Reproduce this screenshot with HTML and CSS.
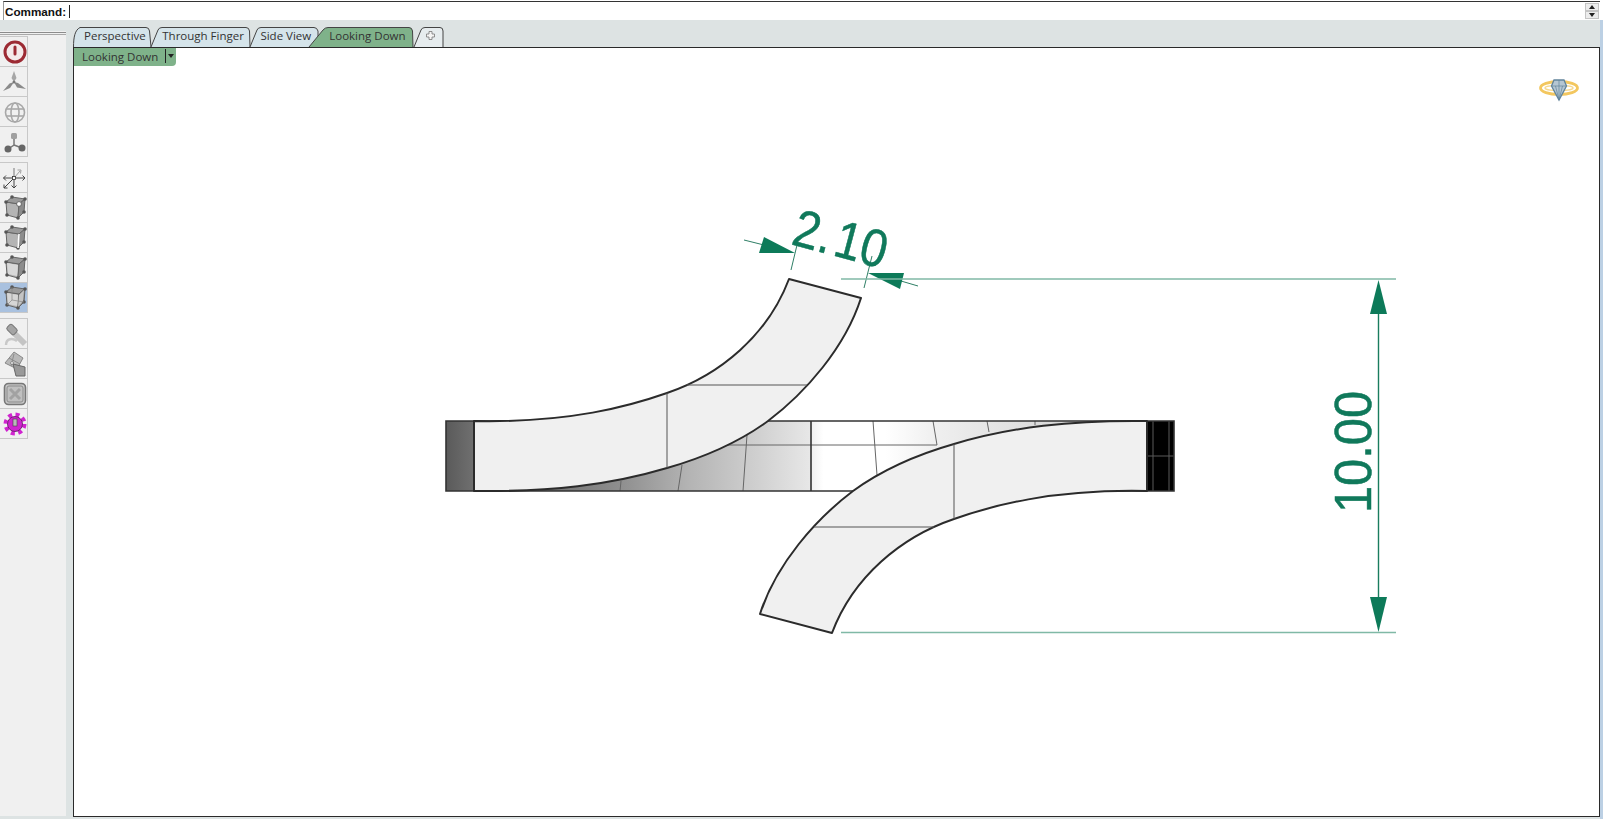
FILE: index.html
```html
<!DOCTYPE html>
<html lang="en">
  <head>
    <meta charset="UTF-8" />
    <title>Looking Down</title>
    <link rel="stylesheet" href="styles.css">
  </head>
  <body>
    <svg class="defs" width="0" height="0">
      <defs>
        <symbol id="cube" viewBox="0 0 28 29">
          <polygon points="6,10 19,12 18,26 7,23" fill="#b4b4b4" stroke="#666" stroke-width="1" />
          <polygon points="6,10 12,5 25,7 19,12" fill="#9a9a9a" stroke="#666" stroke-width="1" />
          <polygon points="19,12 25,7 24,20 18,26" fill="#8c8c8c" stroke="#666" stroke-width="1" />
          <g fill="#555">
            <circle cx="6" cy="10" r="1.8" />
            <circle cx="12" cy="5" r="1.8" />
            <circle cx="25" cy="7" r="1.8" />
            <circle cx="24" cy="20" r="1.8" />
            <circle cx="18" cy="26" r="1.8" />
            <circle cx="7" cy="23" r="1.8" />
          </g>
        </symbol>
        <linearGradient id="shade-left" gradientUnits="userSpaceOnUse" x1="540" y1="0" x2="812" y2="0">
          <stop offset="0" stop-color="#6e6e6e" />
          <stop offset="0.3" stop-color="#8f8f8f" />
          <stop offset="0.55" stop-color="#b4b4b4" />
          <stop offset="0.8" stop-color="#d0d0d0" />
          <stop offset="1" stop-color="#e8e8e8" />
        </linearGradient>
        <linearGradient id="shade-right" gradientUnits="userSpaceOnUse" x1="811" y1="0" x2="1060" y2="0">
          <stop offset="0" stop-color="#f0f0f0" />
          <stop offset="0.05" stop-color="#fff" />
          <stop offset="0.3" stop-color="#fff" />
          <stop offset="0.5" stop-color="#efefef" />
          <stop offset="1" stop-color="#d8d8d8" />
        </linearGradient>
        <linearGradient id="cap-left" gradientUnits="userSpaceOnUse" x1="446" y1="0" x2="474" y2="0">
          <stop offset="0" stop-color="#5a5a5a" />
          <stop offset="1" stop-color="#707070" />
        </linearGradient>
        <g id="band">
          <path class="band-edge" d="M474 421 C570 423 630 406 667 393 C720 375 768 335 789 279 L861 298 C845 348 805 393 768 421 C735 445 695 460 667 468 C610 485 550 492 474 491 Z" />
          <line class="band-line" x1="667" y1="393" x2="667" y2="468" />
          <line class="band-line" x1="687" y1="385" x2="807" y2="385" />
        </g>
      </defs>
    </svg>

    <div class="command-bar">
      <span class="command-label">Command:</span>
      <span class="caret"></span>
      <div class="spinner">
        <span class="spin-btn"><i class="arrow-up"></i></span>
        <span class="spin-btn"><i class="arrow-down"></i></span>
      </div>
    </div>

    <div class="workspace">
      <aside class="sidebar">
        <div class="gripper"></div>

        <div class="tool-group">
          <div class="tool">
            <svg viewBox="0 0 28 29">
              <circle cx="15" cy="15" r="10" fill="#f4eaea" stroke="#9c2a33" stroke-width="3" />
              <line x1="15" y1="10" x2="15" y2="17" stroke="#9c2a33" stroke-width="3" stroke-linecap="round" />
            </svg>
          </div>
          <div class="tool">
            <svg viewBox="0 0 28 29">
              <path d="M14 15 L11.5 11 L14 4 L16.5 11 Z" fill="#a6a6a6" />
              <path d="M14 15 L9.5 16.5 L3 24 L10 21 Z" fill="#8a8a8a" />
              <path d="M14 15 L18 16 L26 22 L17 20.5 Z" fill="#8a8a8a" />
              <circle cx="14" cy="15" r="1.5" fill="#777" />
            </svg>
          </div>
          <div class="tool">
            <svg viewBox="0 0 28 29" fill="none" stroke="#a8a8a8" stroke-width="1.6">
              <circle cx="15" cy="15.5" r="9.5" />
              <ellipse cx="15" cy="15.5" rx="4" ry="9.5" />
              <line x1="6" y1="12" x2="24" y2="12" />
              <line x1="6" y1="19" x2="24" y2="19" />
            </svg>
          </div>
          <div class="tool">
            <svg viewBox="0 0 28 29">
              <path d="M14 9 V18 L8 22 M14 18 L22 21" fill="none" stroke="#777" stroke-width="1.5" />
              <rect x="11" y="6" width="6" height="6" rx="1.5" fill="#a0a0a0" />
              <circle cx="8" cy="22" r="3.5" fill="#666" />
              <circle cx="22" cy="21" r="3.5" fill="#666" />
            </svg>
          </div>
        </div>

        <div class="tool-group">
          <div class="tool">
            <svg viewBox="0 1 28 29" fill="none" stroke-width="1">
              <path d="M14 16 V6" stroke="#b4b4b4" stroke-width="2" />
              <path d="M14 16 L20 9" stroke="#a0a0a0" />
              <path d="M17.5 8 L21 8 L20.5 11.5" stroke="#a0a0a0" />
              <path d="M3.5 16 H25 M6 13.5 L3.5 16 L6 18.5 M22.5 13.5 L25 16 L22.5 18.5" stroke="#444" />
              <path d="M14 16 V26 M11.5 23.5 L14 26 L16.5 23.5" stroke="#444" />
              <path d="M14 16 L4 26 M4 22.5 V26 H7.5" stroke="#444" />
              <rect x="12.5" y="14.5" width="3" height="3" fill="#fff" stroke="#333" stroke-width="0.8" />
            </svg>
          </div>
          <div class="tool">
            <svg viewBox="0 1 28 29">
              <use href="#cube" width="28" height="29" />
              <circle cx="19" cy="12" r="2.4" fill="#fff" stroke="#555" stroke-width="0.8" />
            </svg>
          </div>
          <div class="tool">
            <svg viewBox="0 1 28 29">
              <use href="#cube" width="28" height="29" />
              <line x1="19" y1="12" x2="18" y2="26" stroke="#fff" stroke-width="1.6" />
            </svg>
          </div>
          <div class="tool">
            <svg viewBox="0 1 28 29">
              <use href="#cube" width="28" height="29" />
              <polygon points="7,11 18,13 17,24 8,22" fill="#d8d8d8" />
            </svg>
          </div>
          <div class="tool tool-active">
            <svg viewBox="0 1 28 29">
              <use href="#cube" width="28" height="29" />
              <polygon points="7,11 18,13 17,24 8,22" fill="#d6d6d6" />
              <polygon points="19,13 24,8 23,19 18,25" fill="#c4c4c4" />
              <path d="M12 5 L12 18 L7 23 M12 18 L24 20" fill="none" stroke="#888" stroke-width="0.7" />
            </svg>
          </div>
        </div>

        <div class="tool-group">
          <div class="tool">
            <svg viewBox="0 0 28 29">
              <path d="M6 26 C6 19 13 19 17 22" fill="none" stroke="#c8c8c8" stroke-width="2.5" />
              <path d="M14 14 L25 25" stroke="#c4c4c4" stroke-width="6" />
              <rect x="7" y="7" width="10" height="7" rx="2" transform="rotate(45 12 10.5)" fill="#a4a4a4" stroke="#777" />
            </svg>
          </div>
          <div class="tool">
            <svg viewBox="0 0 28 29">
              <polygon points="5,14 14,3 23,9 17,20" fill="#b8b8b8" stroke="#888" />
              <line x1="9" y1="9" x2="20" y2="15" stroke="#8c8c8c" />
              <line x1="14" y1="5" x2="11" y2="17" stroke="#8c8c8c" />
              <polygon points="13,15 25,18 25,27 16,27" fill="#999" stroke="#666" />
              <circle cx="12" cy="14" r="1.4" fill="#fff" stroke="#555" stroke-width="0.6" />
            </svg>
          </div>
          <div class="tool">
            <svg viewBox="0 0 28 29">
              <rect x="4.5" y="4.5" width="21" height="21" rx="4" fill="#c4c4c4" stroke="#777" stroke-width="1.6" />
              <rect x="7" y="7" width="16" height="16" rx="2" fill="#c0c0c0" stroke="#8c8c8c" />
              <path d="M10 10 L20 20 M20 10 L10 20" stroke="#a2a2a2" stroke-width="3" />
            </svg>
          </div>
          <div class="tool">
            <svg viewBox="0 0 28 29">
              <circle cx="15" cy="15" r="9.5" fill="none" stroke="#d024d0" stroke-width="4" stroke-dasharray="4 3.5" />
              <circle cx="15" cy="15" r="7.5" fill="#d024d0" stroke="#5a145a" stroke-width="0.8" />
              <rect x="13" y="10" width="4" height="7" fill="#b9b9b9" stroke="#444" stroke-width="0.6" />
            </svg>
          </div>
        </div>
      </aside>

      <main class="view-area">
        <div class="tab-strip">
          <svg class="tab-shapes" viewBox="73 20 1530 27" width="1530" height="27">
            <path class="tab-shape" d="M73.5 47 C73.5 37 75 30 80 27.5 H146 Q149 27.5 149.5 31 L151 47" />
            <path class="tab-shape" d="M151 47 L158 30 Q159 27.5 162 27.5 H246 Q249 27.5 249.5 31 L250 47" />
            <path class="tab-shape" d="M250 47 L257 30 Q258 27.5 261 27.5 H314 Q317 27.5 318 31 L318 47" />
            <path class="tab-shape tab-shape-active" d="M309 47 L323 30 Q325 27.5 328 27.5 H409 Q412 27.5 412.5 31 L413 47" />
            <path class="tab-shape tab-shape-add" d="M414 47 L421 30 Q422 27.5 425 27.5 H440 Q443 27.5 443 31 V47" />
          </svg>
          <span class="tab">Perspective</span>
          <span class="tab">Through Finger</span>
          <span class="tab">Side View</span>
          <span class="tab tab-active">Looking Down</span>
          <svg class="tab-plus" viewBox="0 0 9 9" width="9" height="9">
            <path d="M3 .5 H6 V3 H8.5 V6 H6 V8.5 H3 V6 H.5 V3 H3 Z" fill="#f4f4f4" stroke="#777" stroke-width="0.8" />
          </svg>
        </div>

        <div class="viewport">
          <div class="view-label">
            <span class="view-name">Looking Down</span>
            <span class="view-menu"><i class="arrow-down"></i></span>
          </div>

          <svg class="drawing" viewBox="74 48 1525 768">
            <!-- ring icon, top right -->
            <g fill="none">
              <ellipse cx="1559" cy="88" rx="18.5" ry="6.5" stroke="#f3c75f" stroke-width="2.8" />
              <ellipse cx="1559" cy="88" rx="14" ry="2.6" stroke="#f6d98f" stroke-width="1.4" />
              <polygon points="1554,80 1564,80 1566.5,86 1559,100 1551.5,86" fill="#b5c6d2" stroke="#62849b" stroke-width="1.3" />
              <path d="M1552 86 H1566 M1559 80 V100 M1555.5 86 L1559 100 L1562.5 86" stroke="#62849b" stroke-width="0.7" />
            </g>

            <!-- flat band behind -->
            <rect x="474" y="421" width="337" height="70" fill="url(#shade-left)" />
            <rect x="811" y="421" width="336" height="70" fill="url(#shade-right)" />
            <rect x="446" y="421" width="28" height="70" fill="url(#cap-left)" />
            <rect x="1147" y="421" width="27" height="70" fill="#000" />
            <g class="seam">
              <line x1="621" y1="481" x2="620" y2="491" />
              <line x1="682" y1="465" x2="678" y2="491" />
              <line x1="747" y1="435" x2="743" y2="491" />
              <line x1="873" y1="421" x2="877" y2="475" />
              <line x1="933" y1="421" x2="937" y2="445" />
              <line x1="987" y1="421" x2="989" y2="432" />
              <line x1="1035" y1="421" x2="1035" y2="425" />
              <line x1="727" y1="445" x2="937" y2="445" />
            </g>
            <g class="cap-seam">
              <line x1="1153" y1="421" x2="1153" y2="491" />
              <line x1="1169" y1="421" x2="1169" y2="491" />
              <line x1="1147" y1="456" x2="1174" y2="456" />
            </g>
            <path class="back-edge" d="M446 421 H1174 V491 H446 Z M474 421 V491 M811 421 V491 M1147 421 V491" />

            <!-- two bent ends, same shape turned half way round -->
            <use href="#band" />
            <use href="#band" transform="rotate(180 810.5 456)" />

            <!-- 2.10 width dimension -->
            <g class="dim-thin">
              <line x1="797" y1="245" x2="791" y2="270" />
              <line x1="744" y1="240" x2="764" y2="245" />
              <line x1="872" y1="256" x2="864" y2="288" />
              <line x1="901" y1="281" x2="918" y2="286" />
            </g>
            <polygon class="dim-fill" points="764,237 759,253 795,253" />
            <polygon class="dim-fill" points="868,273 904,273 900,289" />
            <text class="dim-text" font-size="50" transform="translate(790 244) rotate(15) scale(0.94 1.06)">2.<tspan dx="4">10</tspan></text>

            <!-- 10.00 height dimension -->
            <line class="dim-ext" x1="841" y1="279" x2="1396" y2="279" />
            <line class="dim-ext" x1="841" y1="632.5" x2="1396" y2="632.5" />
            <line class="dim-line" x1="1378.5" y1="285" x2="1378.5" y2="627" />
            <polygon class="dim-fill" points="1378.5,280 1387,314 1370,314" />
            <polygon class="dim-fill" points="1378.5,632 1387,597 1370,597" />
            <text class="dim-text" font-size="52" textLength="122" lengthAdjust="spacingAndGlyphs" transform="translate(1371 513) rotate(-90)">10.00</text>
          </svg>
        </div>
      </main>
    </div>
  </body>
</html>
```

FILE: styles.css
```css
html,
body {
  margin: 0;
  padding: 0;
  height: 100%;
}

body {
  display: flex;
  flex-direction: column;
  width: 1603px;
  height: 819px;
  overflow: hidden;
  background-color: #fff;
  font-family: "Liberation Sans", Arial, sans-serif;
}

.defs {
  position: absolute;
}

/* Command line */
.command-bar {
  display: flex;
  align-items: center;
  flex: none;
  height: 19px;
  margin: 1px 3px 0 3px;
  padding-left: 1px;
  box-sizing: border-box;
  border-top: 1px solid #333;
  border-left: 1px solid #999;
  background-color: #fff;
}

.command-label {
  font-size: 11.7px;
  font-weight: bold;
  color: #111;
}

.caret {
  width: 1px;
  height: 13px;
  margin-left: 3px;
  background-color: #222;
}

.spinner {
  display: flex;
  flex-direction: column;
  margin-left: auto;
  margin-right: 1px;
}

.spin-btn {
  display: flex;
  align-items: center;
  justify-content: center;
  width: 14px;
  height: 8px;
  box-sizing: border-box;
  border: 1px solid #c4c4c4;
  background-color: #ececec;
}

.arrow-up,
.arrow-down {
  display: block;
  width: 0;
  height: 0;
  border-left: 3.5px solid transparent;
  border-right: 3.5px solid transparent;
}

.arrow-up {
  border-bottom: 4px solid #222;
}

.arrow-down {
  border-top: 4px solid #222;
}

/* Everything under the command line */
.workspace {
  display: flex;
  flex: 1;
  min-height: 0;
  border-right: 3px solid #bcd0e4;
  background-color: #dde3e3;
}

.sidebar {
  flex: none;
  width: 66px;
  margin: 11px 7px 3px 0;
  background-color: #f0f0f0;
}

.gripper {
  height: 1px;
  margin: 1px 0;
  border-top: 1px solid #8c8c8c;
  border-bottom: 1px solid #a8a8a8;
}

.tool-group {
  display: flex;
  flex-direction: column;
  width: 28px;
  margin-bottom: 5px;
  border-top: 1px solid #c8c8c8;
}

.tool {
  height: 30px;
  box-sizing: border-box;
  border-right: 1px solid #c8c8c8;
  border-bottom: 1px solid #c8c8c8;
}

.tool svg {
  display: block;
  width: 28px;
  height: 29px;
}

.tool-active {
  background-color: #a9c1df;
}

/* Tabs */
.view-area {
  display: flex;
  flex-direction: column;
  flex: 1;
  min-width: 0;
}

.tab-strip {
  position: relative;
  display: flex;
  align-items: center;
  flex: none;
  gap: 16.5px;
  height: 27px;
  padding: 4px 0 0 11px;
  box-sizing: border-box;
}

.tab-shapes {
  position: absolute;
  left: 0;
  top: 0;
}

.tab-shape {
  fill: #d5e4ea;
  stroke: #444;
  stroke-width: 1;
}

.tab-shape-active {
  fill: #7fb28a;
}

.tab-shape-add {
  fill: #e6ecee;
}

.tab {
  position: relative;
  font-family: "Open Sans", sans-serif;
  font-size: 11.5px;
  color: #333;
  white-space: nowrap;
}

.tab-active {
  margin-left: 1.5px;
}

.tab-plus {
  position: relative;
  margin-left: 4px;
}

/* Viewport */
.viewport {
  position: relative;
  flex: 1;
  margin-bottom: 2px;
  border: 1px solid #2a2a2a;
  background-color: #fff;
}

.view-label {
  position: absolute;
  left: 0;
  top: 0;
  display: flex;
  align-items: center;
  width: 102px;
  height: 18px;
  box-sizing: border-box;
  padding: 0 0 2px 8px;
  border-bottom-right-radius: 4px;
  background-color: #7fb28a;
  font-family: "Open Sans", sans-serif;
  font-size: 11.5px;
  color: #333;
}

.view-menu {
  display: flex;
  align-items: center;
  height: 14px;
  margin-left: 7px;
  padding-left: 2px;
  border-left: 1px solid #222;
}

.drawing {
  display: block;
  width: 100%;
  height: 100%;
}

.band-edge {
  fill: #f0f0f0;
  stroke: #2b2b2b;
  stroke-width: 2;
  stroke-linejoin: round;
}

.band-line {
  stroke: #555;
  stroke-width: 1;
}

.seam line {
  stroke: #666;
  stroke-width: 1;
}

.cap-seam line {
  stroke: #5a5a5a;
  stroke-width: 1;
}

.back-edge {
  fill: none;
  stroke: #333;
  stroke-width: 1.6;
}

/* Dimension annotations */
.dim-thin line {
  stroke: #2f7f66;
  stroke-width: 1;
}

.dim-ext {
  stroke: #80b9a6;
  stroke-width: 1.6;
}

.dim-line {
  stroke: #1a7d5e;
  stroke-width: 1.4;
}

.dim-fill {
  fill: #0d7a59;
}

.dim-text {
  font-family: "Liberation Sans", Arial, sans-serif;
  fill: #10795b;
  stroke: #10795b;
  stroke-width: 0.5;
}
```
